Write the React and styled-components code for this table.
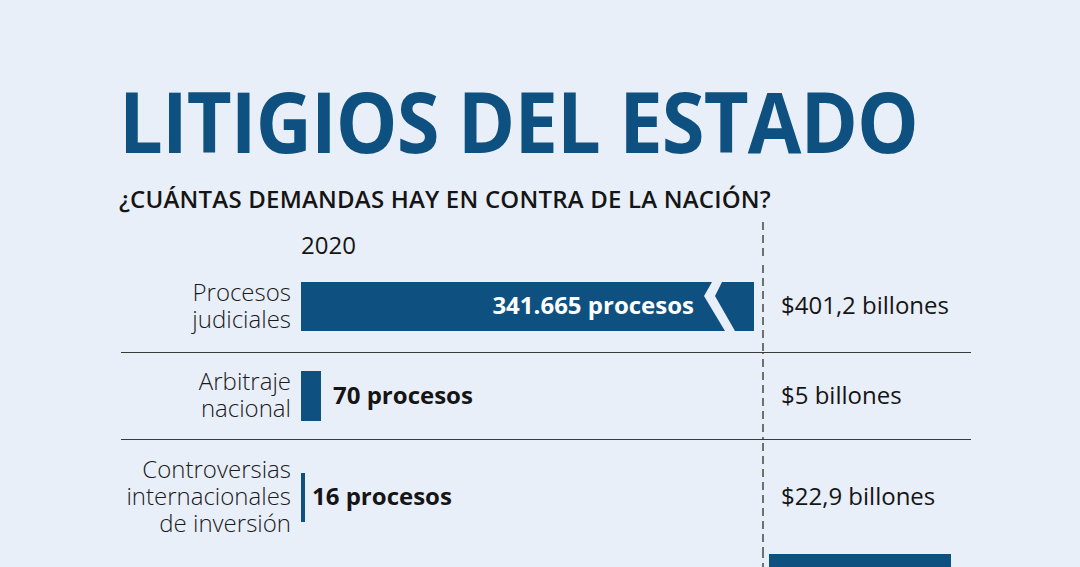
import React from "react";
import styled, { createGlobalStyle } from "styled-components";

const GlobalStyle = createGlobalStyle`
  html, body { margin: 0; padding: 0; }
  body {
    background: #e9eff9;
    font-family: "Open Sans", "Liberation Sans", sans-serif;
    color: #151515;
    overflow: hidden;
  }
`;

const BLUE = "#0e5180";

const Page = styled.div`
  width: 1080px;
  height: 567px;
  box-sizing: border-box;
  padding: 79px 0 0 120px;
  overflow: hidden;
`;

const Title = styled.h1`
  margin: 0 0 0 -1px;
  font-size: 84px;
  line-height: 84px;
  font-weight: 700;
  letter-spacing: -1px;
  color: ${BLUE};
  white-space: nowrap;
  transform: scaleX(0.925);
  transform-origin: left center;
`;

const Subtitle = styled.h2`
  margin: 21px 0 0 -1px;
  font-size: 24px;
  line-height: 29px;
  font-weight: 600;
  letter-spacing: 0.2px;
  color: #151515;
  white-space: nowrap;
`;

const Chart = styled.div`
  margin: 9px 0 0 1px;
  width: 850px;
`;

const Row = styled.div`
  display: grid;
  grid-template-columns: 180px 461px 209px;
  height: ${(p) => p.$h}px;
  border-bottom: ${(p) => (p.$line ? "1px solid #3a3a3a" : "none")};
`;

const Label = styled.div`
  align-self: center;
  margin-bottom: 4px;
  padding-right: 10px;
  text-align: right;
  font-size: 24px;
  line-height: 27px;
  font-weight: 300;
  color: #1a1a1a;
`;

const BarCell = styled.div`
  display: flex;
  align-items: center;
  gap: ${(p) => p.$gap || 0}px;
`;

const Year = styled.span`
  padding-top: 5px;
  font-size: 24px;
  font-weight: 400;
  color: #151515;
`;

const Bar = styled.div`
  flex: none;
  width: ${(p) => p.$w}px;
  height: ${(p) => p.$hh || 49}px;
  background: ${BLUE};
`;

const BigBar = styled.div`
  position: relative;
  flex: none;
  width: 453px;
  height: 49px;
  display: flex;
  align-items: center;
  justify-content: flex-end;
  padding-right: 60px;
  box-sizing: border-box;
`;

const BarShape = styled.svg`
  position: absolute;
  inset: 0;
  width: 100%;
  height: 100%;
`;

const BarText = styled.span`
  position: relative;
  padding-bottom: 4px;
  font-size: 24px;
  font-weight: 700;
  color: ${(p) => (p.$inverse ? "#ffffff" : "#151515")};
  white-space: nowrap;
`;

const ValueCell = styled.div`
  display: flex;
  align-items: ${(p) => (p.$top ? "flex-start" : "center")};
  padding-left: ${(p) => (p.$pad != null ? p.$pad : 19)}px;
  padding-bottom: ${(p) => (p.$top ? 0 : 4)}px;
  background-image: linear-gradient(to bottom, #707070 0 8px, transparent 8px 13px);
  background-size: 2px 13px;
  background-repeat: repeat-y;
  background-position: 0 ${(p) => p.$offset || 0}px;
  font-size: 24px;
  font-weight: 400;
  color: #151515;
  white-space: nowrap;
`;

const BottomBlock = styled.div`
  width: 182px;
  height: 40px;
  background: ${BLUE};
`;

export default function App() {
  return (
    <>
      <GlobalStyle />
      <Page>
        <Title>LITIGIOS DEL ESTADO</Title>
        <Subtitle>¿CUÁNTAS DEMANDAS HAY EN CONTRA DE LA NACIÓN?</Subtitle>
        <Chart>
          <Row $h={39}>
            <Label />
            <BarCell>
              <Year>2020</Year>
            </BarCell>
            <ValueCell />
          </Row>
          <Row $h={91} $line>
            <Label>
              Procesos
              <br />
              judiciales
            </Label>
            <BarCell>
              <BigBar>
                <BarShape viewBox="0 0 453 49" preserveAspectRatio="none">
                  <polygon points="0,0 411,0 403,14 424,49 0,49" fill={BLUE} />
                  <polygon points="421,0 453,0 453,49 434,49 414,14" fill={BLUE} />
                </BarShape>
                <BarText $inverse>341.665 procesos</BarText>
              </BigBar>
            </BarCell>
            <ValueCell $offset={4}>$401,2 billones</ValueCell>
          </Row>
          <Row $h={86} $line>
            <Label>
              Arbitraje
              <br />
              nacional
            </Label>
            <BarCell $gap={12}>
              <Bar $w={20} $hh={50} />
              <BarText>70 procesos</BarText>
            </BarCell>
            <ValueCell $offset={6}>$5 billones</ValueCell>
          </Row>
          <Row $h={114}>
            <Label>
              Controversias
              <br />
              internacionales
              <br />
              de inversión
            </Label>
            <BarCell $gap={7}>
              <Bar $w={4} />
              <BarText>16 procesos</BarText>
            </BarCell>
            <ValueCell $offset={3}>$22,9 billones</ValueCell>
          </Row>
          <Row $h={40}>
            <Label />
            <BarCell />
            <ValueCell $top $pad={7} $offset={9}>
              <BottomBlock />
            </ValueCell>
          </Row>
        </Chart>
      </Page>
    </>
  );
}
